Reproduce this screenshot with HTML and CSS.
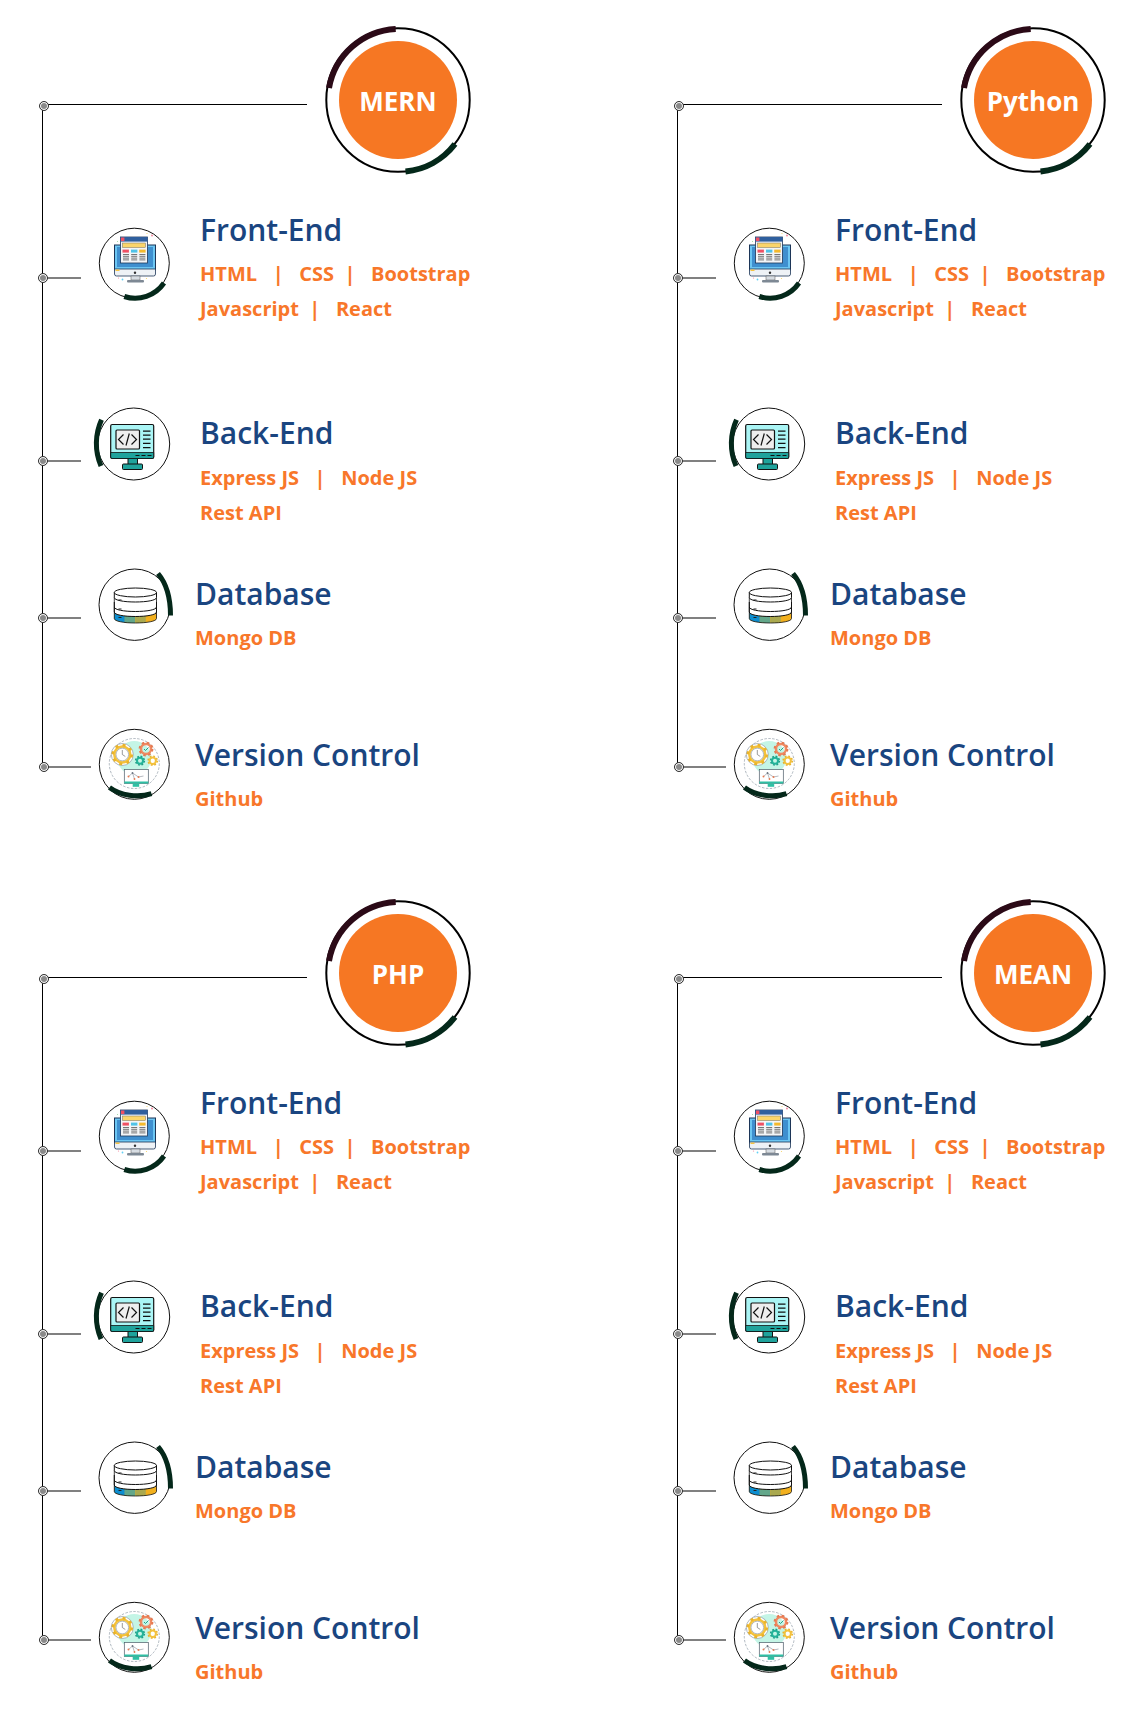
FILE: index.html
```html
<!DOCTYPE html>
<html lang="en">
<head>
<meta charset="utf-8">
<title>Technology stacks</title>
<link rel="stylesheet" href="styles.css">
</head>
<body>
<svg class="defs" aria-hidden="true">
  <symbol id="ic-front" viewBox="0 0 90 90">
    <circle cx="44.3" cy="44.2" r="35" fill="#fff" stroke="#111" stroke-width="1"/>
    <path d="M34.3 77.5A35 35 0 0 0 74 64" fill="none" stroke="#04281a" stroke-width="5"/>
    <rect x="24.5" y="26" width="41" height="25" fill="#6cc6f2" stroke="#1c3557" stroke-width="1"/>
    <rect x="27" y="28" width="36" height="20" fill="#3f8fcf"/>
    <path d="M24.5 50h41v5a2 2 0 0 1-2 2h-37a2 2 0 0 1-2-2z" fill="#eef2f6" stroke="#1c3557" stroke-width=".8"/>
    <rect x="25.5" y="50.5" width="4" height="1.5" fill="#f5c445"/>
    <circle cx="45" cy="53.8" r="1.2" fill="#333"/>
    <rect x="41" y="57" width="9" height="4" fill="#d7dde3" stroke="#555" stroke-width=".5"/>
    <rect x="37" y="61" width="17" height="2.6" rx="1" fill="#7d8894"/>
    <rect x="30.5" y="18" width="27" height="26" fill="#f3f5f7" stroke="#1c3557" stroke-width=".8"/>
    <rect x="30.5" y="18" width="27" height="4.6" fill="#2f5f9e"/>
    <rect x="31" y="18.5" width="3.4" height="3.6" fill="#ef5064"/>
    <rect x="32.5" y="24" width="23" height="4.6" fill="#fbd56b" stroke="#555" stroke-width=".4"/>
    <rect x="32.5" y="30.6" width="6.4" height="3" fill="#ef5064"/>
    <rect x="41" y="30.6" width="6.4" height="3" fill="#4fc3e8"/>
    <rect x="49.2" y="30.6" width="6.4" height="3" fill="#f4b92d"/>
    <path d="M33 35.5h6M33 37.3h6M33 39.1h6M33 40.9h6M41.2 35.5h6M41.2 37.3h6M41.2 39.1h6M41.2 40.9h6M49.4 35.5h6M49.4 37.3h6M49.4 39.1h6M49.4 40.9h6" stroke="#666" stroke-width=".9"/>
    <circle cx="62" cy="16.5" r="1" fill="#f58aa0"/>
    <circle cx="57" cy="14.5" r=".6" fill="#f6d365"/>
    <circle cx="32.5" cy="60.5" r=".9" fill="#62d0f5"/>
    <circle cx="27.5" cy="22.5" r=".5" fill="#8fd18f"/>
    <circle cx="28.5" cy="59" r=".6" fill="#f58aa0"/>
    <circle cx="56.5" cy="59.5" r=".6" fill="#f6d365"/>
  </symbol>
  <symbol id="ic-back" viewBox="0 0 90 90">
    <circle cx="43.7" cy="45" r="36" fill="#fff" stroke="#111" stroke-width="1"/>
    <path d="M11.5 20.7C5 35 4.500 52 11 67" fill="none" stroke="#04281a" stroke-width="5"/>
    <rect x="38" y="59" width="9.5" height="6.5" fill="#1fa39c" stroke="#111" stroke-width="1"/>
    <rect x="32.5" y="65" width="20" height="5.5" rx="1" fill="#1fa39c" stroke="#111" stroke-width="1"/>
    <rect x="20.7" y="25.5" width="43" height="34" rx="1.5" fill="#aaf5f5" stroke="#111" stroke-width="1.2"/>
    <path d="M20.7 53.5h43V58a1.5 1.5 0 0 1-1.5 1.5h-40A1.5 1.5 0 0 1 20.7 58z" fill="#1fa39c" stroke="#111" stroke-width=".8"/>
    <path d="M45.5 56.5h4M51.5 56.5h4M57.5 56.5h4" stroke="#111" stroke-width="1"/>
    <rect x="26" y="31" width="23.5" height="19" rx="1" fill="#eeeeee" stroke="#111" stroke-width="1.2"/>
    <path d="M33.5 35.5l-5 5 5 5M41.5 35.5l5 5-5 5M39.3 34.5l-3.3 12" fill="none" stroke="#111" stroke-width="1.2"/>
    <path d="M53 32.2h7.5M53 36.2h7.5M53 40.2h7.5M53 44.3h7.5M53 48.6h7.5" stroke="#111" stroke-width="1.2"/>
  </symbol>
  <symbol id="ic-db" viewBox="0 0 90 90">
    <circle cx="44.7" cy="44.7" r="35.7" fill="#fff" stroke="#111" stroke-width="1"/>
    <path d="M68 13.500C76 23 80.500 37 80.500 55.500" fill="none" stroke="#04281a" stroke-width="5"/>
    <path d="M24.3 52v6.5c0 2.8 9.5 4.5 21 4.5s21.2-1.7 21.2-4.5V52c0 2.8-9.7 4.5-21.2 4.5S24.3 54.8 24.3 52z" fill="#f2b01e"/>
    <path d="M24.3 52v6.5c0 1.8 4 3.2 10.500 3.900V56c-6.500-.7-10.500-2.200-10.500-4z" fill="#0d8ed0"/>
    <path d="M34.800 56v6.400c3.200.4 6.800.6 10.500.6V56.500c-3.700 0-7.300-.2-10.500-.5z" fill="#63a78a"/>
    <path d="M45.300 56.500V63c3.700 0 7.300-.2 10.500-.6V56c-3.200.3-6.800.5-10.500.5z" fill="#aaa94f"/>
    <path d="M24.300 37.500v21c0 2.800 9.500 4.500 21 4.500s21.200-1.700 21.200-4.500v-21" fill="none" stroke="#111" stroke-width=".8"/>
    <ellipse cx="45.400" cy="32.500" rx="21.100" ry="4.500" fill="#fff" stroke="#111" stroke-width="1"/>
    <path d="M24.300 32.500v5c0 2.800 9.500 4.500 21 4.500s21.200-1.700 21.200-4.500v-5M24.300 42v5c0 2.800 9.500 4.500 21 4.500s21.200-1.700 21.200-4.500v-5M24.300 47v5c0 2.800 9.500 4.500 21 4.500s21.200-1.700 21.200-4.500v-5" fill="none" stroke="#111" stroke-width="1"/>
    <path d="M28.500 40h3M28.500 49h3M28.500 57.500h3" stroke="#222" stroke-width="1"/>
  </symbol>
  <symbol id="ic-vc" viewBox="0 0 90 90">
    <circle cx="44.300" cy="44.300" r="35" fill="#fff" stroke="#111" stroke-width="1"/>
    <path d="M19.500 67.500C30 75.500 48 78 61.500 73.700" fill="none" stroke="#04281a" stroke-width="5"/>
    <circle cx="44.300" cy="38" r="17" fill="#c4f5e6"/>
    <circle cx="44.300" cy="43.500" r="25" fill="none" stroke="#7a8896" stroke-width=".6" stroke-dasharray="2.500 1.500"/>
    <circle cx="32.300" cy="34.500" r="11" fill="#fff" stroke="#7a8896" stroke-width=".6"/>
    <g fill="none">
      <circle cx="32.300" cy="34.500" r="8" stroke="#f4c23c" stroke-width="2.500"/>
      <circle cx="32.300" cy="34.500" r="9.500" stroke="#e9b32c" stroke-width="2.500" stroke-dasharray="3 4.460"/>
      <circle cx="32.300" cy="34.500" r="6.300" stroke="#6b7480" stroke-width=".5"/>
      <circle cx="56" cy="29" r="5" stroke="#ef8a62" stroke-width="2.500"/>
      <circle cx="56" cy="29" r="6.400" stroke="#e57a52" stroke-width="2" stroke-dasharray="2.500 2.520"/>
      <circle cx="50" cy="40.700" r="3" stroke="#22b49a" stroke-width="2"/>
      <circle cx="50" cy="40.700" r="4.400" stroke="#1f9f88" stroke-width="1.500" stroke-dasharray="1.800 1.660"/>
      <circle cx="62.700" cy="40.700" r="3.200" stroke="#f4c23c" stroke-width="2"/>
      <circle cx="62.700" cy="40.700" r="4.600" stroke="#e9b32c" stroke-width="1.500" stroke-dasharray="1.800 1.810"/>
    </g>
    <path d="M32.300 30v4.500l3 2" fill="none" stroke="#555" stroke-width=".6"/>
    <path d="M54 29l1.500 1.500 3-3" fill="none" stroke="#1f9f88" stroke-width="1"/>
    <rect x="34.300" y="49.500" width="24" height="14" fill="#fff" stroke="#4a5a66" stroke-width=".7"/>
    <rect x="34.300" y="61.500" width="24" height="2" fill="#2fc0a4"/>
    <rect x="42.700" y="63.500" width="6.500" height="3.300" fill="#2fc0a4"/>
    <path d="M38.500 56.500l4-3.500 6 4 5-1M42.500 53l2 6" fill="none" stroke="#6b7480" stroke-width=".5"/>
    <circle cx="38.500" cy="56.500" r="1" fill="#e57a52"/>
    <circle cx="48.500" cy="57" r="1" fill="#e57a52"/>
    <circle cx="44.500" cy="59" r=".9" fill="#e57a52"/>
    <circle cx="42.500" cy="53" r=".9" fill="#6b7480"/>
  </symbol>
  <symbol id="ring" viewBox="0 0 156 156">
    <circle cx="78" cy="78" r="71.700" fill="none" stroke="#000" stroke-width="2"/>
    <path d="M75.700 7A71.500 71.500 0 0 0 9 66" fill="none" stroke="#2b0a17" stroke-width="6"/>
    <path d="M135 122A71.500 71.500 0 0 1 85.500 149.500" fill="none" stroke="#04281a" stroke-width="6"/>
  </symbol>
</svg>

<main class="grid">
  <section class="panel">
    <span class="spine"></span>
    <header class="hub">
      <span class="wire-top"></span><span class="dot dot-top"></span>
      <div class="badge">
        <svg class="ring"><use href="#ring"/></svg>
        <span class="disc">MERN</span>
      </div>
    </header>
    <div class="row row-a">
      <span class="wire"></span><span class="dot"></span>
      <svg class="icon"><use href="#ic-front"/></svg>
      <div class="body">
        <h3>Front-End</h3>
        <p>HTML&nbsp;&nbsp;&nbsp;|&nbsp;&nbsp;&nbsp;CSS&nbsp;&nbsp;|&nbsp;&nbsp;&nbsp;Bootstrap</p>
        <p>Javascript&nbsp;&nbsp;|&nbsp;&nbsp;&nbsp;React</p>
      </div>
    </div>
    <div class="row row-b">
      <span class="wire"></span><span class="dot"></span>
      <svg class="icon"><use href="#ic-back"/></svg>
      <div class="body">
        <h3>Back-End</h3>
        <p>Express JS&nbsp;&nbsp;&nbsp;|&nbsp;&nbsp;&nbsp;Node JS</p>
        <p>Rest API</p>
      </div>
    </div>
    <div class="row row-c">
      <span class="wire"></span><span class="dot"></span>
      <svg class="icon"><use href="#ic-db"/></svg>
      <div class="body">
        <h3>Database</h3>
        <p>Mongo DB</p>
      </div>
    </div>
    <div class="row row-d">
      <span class="wire"></span><span class="dot"></span>
      <svg class="icon"><use href="#ic-vc"/></svg>
      <div class="body">
        <h3>Version Control</h3>
        <p>Github</p>
      </div>
    </div>
  </section>

  <section class="panel">
    <span class="spine"></span>
    <header class="hub">
      <span class="wire-top"></span><span class="dot dot-top"></span>
      <div class="badge">
        <svg class="ring"><use href="#ring"/></svg>
        <span class="disc">Python</span>
      </div>
    </header>
    <div class="row row-a">
      <span class="wire"></span><span class="dot"></span>
      <svg class="icon"><use href="#ic-front"/></svg>
      <div class="body">
        <h3>Front-End</h3>
        <p>HTML&nbsp;&nbsp;&nbsp;|&nbsp;&nbsp;&nbsp;CSS&nbsp;&nbsp;|&nbsp;&nbsp;&nbsp;Bootstrap</p>
        <p>Javascript&nbsp;&nbsp;|&nbsp;&nbsp;&nbsp;React</p>
      </div>
    </div>
    <div class="row row-b">
      <span class="wire"></span><span class="dot"></span>
      <svg class="icon"><use href="#ic-back"/></svg>
      <div class="body">
        <h3>Back-End</h3>
        <p>Express JS&nbsp;&nbsp;&nbsp;|&nbsp;&nbsp;&nbsp;Node JS</p>
        <p>Rest API</p>
      </div>
    </div>
    <div class="row row-c">
      <span class="wire"></span><span class="dot"></span>
      <svg class="icon"><use href="#ic-db"/></svg>
      <div class="body">
        <h3>Database</h3>
        <p>Mongo DB</p>
      </div>
    </div>
    <div class="row row-d">
      <span class="wire"></span><span class="dot"></span>
      <svg class="icon"><use href="#ic-vc"/></svg>
      <div class="body">
        <h3>Version Control</h3>
        <p>Github</p>
      </div>
    </div>
  </section>

  <section class="panel">
    <span class="spine"></span>
    <header class="hub">
      <span class="wire-top"></span><span class="dot dot-top"></span>
      <div class="badge">
        <svg class="ring"><use href="#ring"/></svg>
        <span class="disc">PHP</span>
      </div>
    </header>
    <div class="row row-a">
      <span class="wire"></span><span class="dot"></span>
      <svg class="icon"><use href="#ic-front"/></svg>
      <div class="body">
        <h3>Front-End</h3>
        <p>HTML&nbsp;&nbsp;&nbsp;|&nbsp;&nbsp;&nbsp;CSS&nbsp;&nbsp;|&nbsp;&nbsp;&nbsp;Bootstrap</p>
        <p>Javascript&nbsp;&nbsp;|&nbsp;&nbsp;&nbsp;React</p>
      </div>
    </div>
    <div class="row row-b">
      <span class="wire"></span><span class="dot"></span>
      <svg class="icon"><use href="#ic-back"/></svg>
      <div class="body">
        <h3>Back-End</h3>
        <p>Express JS&nbsp;&nbsp;&nbsp;|&nbsp;&nbsp;&nbsp;Node JS</p>
        <p>Rest API</p>
      </div>
    </div>
    <div class="row row-c">
      <span class="wire"></span><span class="dot"></span>
      <svg class="icon"><use href="#ic-db"/></svg>
      <div class="body">
        <h3>Database</h3>
        <p>Mongo DB</p>
      </div>
    </div>
    <div class="row row-d">
      <span class="wire"></span><span class="dot"></span>
      <svg class="icon"><use href="#ic-vc"/></svg>
      <div class="body">
        <h3>Version Control</h3>
        <p>Github</p>
      </div>
    </div>
  </section>

  <section class="panel">
    <span class="spine"></span>
    <header class="hub">
      <span class="wire-top"></span><span class="dot dot-top"></span>
      <div class="badge">
        <svg class="ring"><use href="#ring"/></svg>
        <span class="disc">MEAN</span>
      </div>
    </header>
    <div class="row row-a">
      <span class="wire"></span><span class="dot"></span>
      <svg class="icon"><use href="#ic-front"/></svg>
      <div class="body">
        <h3>Front-End</h3>
        <p>HTML&nbsp;&nbsp;&nbsp;|&nbsp;&nbsp;&nbsp;CSS&nbsp;&nbsp;|&nbsp;&nbsp;&nbsp;Bootstrap</p>
        <p>Javascript&nbsp;&nbsp;|&nbsp;&nbsp;&nbsp;React</p>
      </div>
    </div>
    <div class="row row-b">
      <span class="wire"></span><span class="dot"></span>
      <svg class="icon"><use href="#ic-back"/></svg>
      <div class="body">
        <h3>Back-End</h3>
        <p>Express JS&nbsp;&nbsp;&nbsp;|&nbsp;&nbsp;&nbsp;Node JS</p>
        <p>Rest API</p>
      </div>
    </div>
    <div class="row row-c">
      <span class="wire"></span><span class="dot"></span>
      <svg class="icon"><use href="#ic-db"/></svg>
      <div class="body">
        <h3>Database</h3>
        <p>Mongo DB</p>
      </div>
    </div>
    <div class="row row-d">
      <span class="wire"></span><span class="dot"></span>
      <svg class="icon"><use href="#ic-vc"/></svg>
      <div class="body">
        <h3>Version Control</h3>
        <p>Github</p>
      </div>
    </div>
  </section>
</main>
</body>
</html>
```

FILE: styles.css
```css
* { box-sizing: border-box; }

html, body {
  margin: 0;
  background: #fff;
}

body {
  font-family: "Open Sans", "Noto Sans", sans-serif;
  width: 1138px;
  min-height: 1722px;
  overflow-x: hidden;
}

.defs {
  position: absolute;
  width: 0;
  height: 0;
}

.grid {
  display: grid;
  grid-template-columns: 635px 503px;
  row-gap: 57px;
  align-items: start;
}

.panel {
  position: relative;
}

.spine {
  position: absolute;
  left: 42px;
  top: 105px;
  height: 662px;
  width: 1px;
  background: #000;
}

.hub {
  position: relative;
  height: 210px;
  padding: 22px 0 0 320px;
}

.wire-top {
  position: absolute;
  left: 48px;
  top: 104px;
  width: 259px;
  height: 1px;
  background: #000;
}

.dot {
  position: absolute;
  left: 38px;
  width: 10px;
  height: 10px;
  border-radius: 50%;
  border: 1px solid #333;
  background: #8a8a8a;
  box-shadow: inset 0 0 0 1px #fff;
  z-index: 1;
}

.dot-top {
  left: 39px;
  top: 101px;
}

.badge {
  position: relative;
  width: 156px;
  height: 156px;
  display: flex;
  align-items: center;
  justify-content: center;
}

.ring {
  position: absolute;
  inset: 0;
  width: 156px;
  height: 156px;
}

.disc {
  width: 118px;
  height: 118px;
  border-radius: 50%;
  background: #f67723;
  color: #fff;
  font-size: 26px;
  font-weight: 700;
  display: flex;
  align-items: center;
  justify-content: center;
  padding-top: 1px;
  position: relative;
}

.row {
  position: relative;
  display: flex;
  align-items: flex-start;
  padding-left: 90px;
}

.row-a { height: 189px; }
.row-b { height: 161px; }
.row-c { height: 160px; }

.icon {
  width: 90px;
  height: 90px;
  flex: none;
}

.row-a .icon { margin-top: 9px; }

.wire {
  position: absolute;
  left: 46px;
  width: 35px;
  height: 2px;
  background: #808080;
}

.row-a .wire { top: 67px; }
.row-a .dot { top: 63px; }
.row-b .wire { top: 61px; }
.row-b .dot { top: 57px; }
.row-c .wire { top: 57px; }
.row-c .dot { top: 53px; }
.row-d .wire { top: 46px; width: 45px; }
.row-d .dot { top: 42px; left: 39px; }

.body {
  flex: 1;
  min-width: 0;
}

.row-a .body { padding-left: 20px; }
.row-b .body { padding: 14px 0 0 20px; }
.row-c .body { padding: 14px 0 0 15px; }
.row-d .body { padding: 15px 0 0 15px; }

.body h3 {
  margin: 0 0 6px;
  font-size: 30px;
  line-height: 40px;
  font-weight: 600;
  color: #1a4580;
  white-space: nowrap;
}

.row-b .body h3 { margin-bottom: 7px; }

.body p {
  margin: 0;
  font-size: 20px;
  line-height: 35px;
  font-weight: 700;
  color: #f8772a;
  white-space: nowrap;
}
```
